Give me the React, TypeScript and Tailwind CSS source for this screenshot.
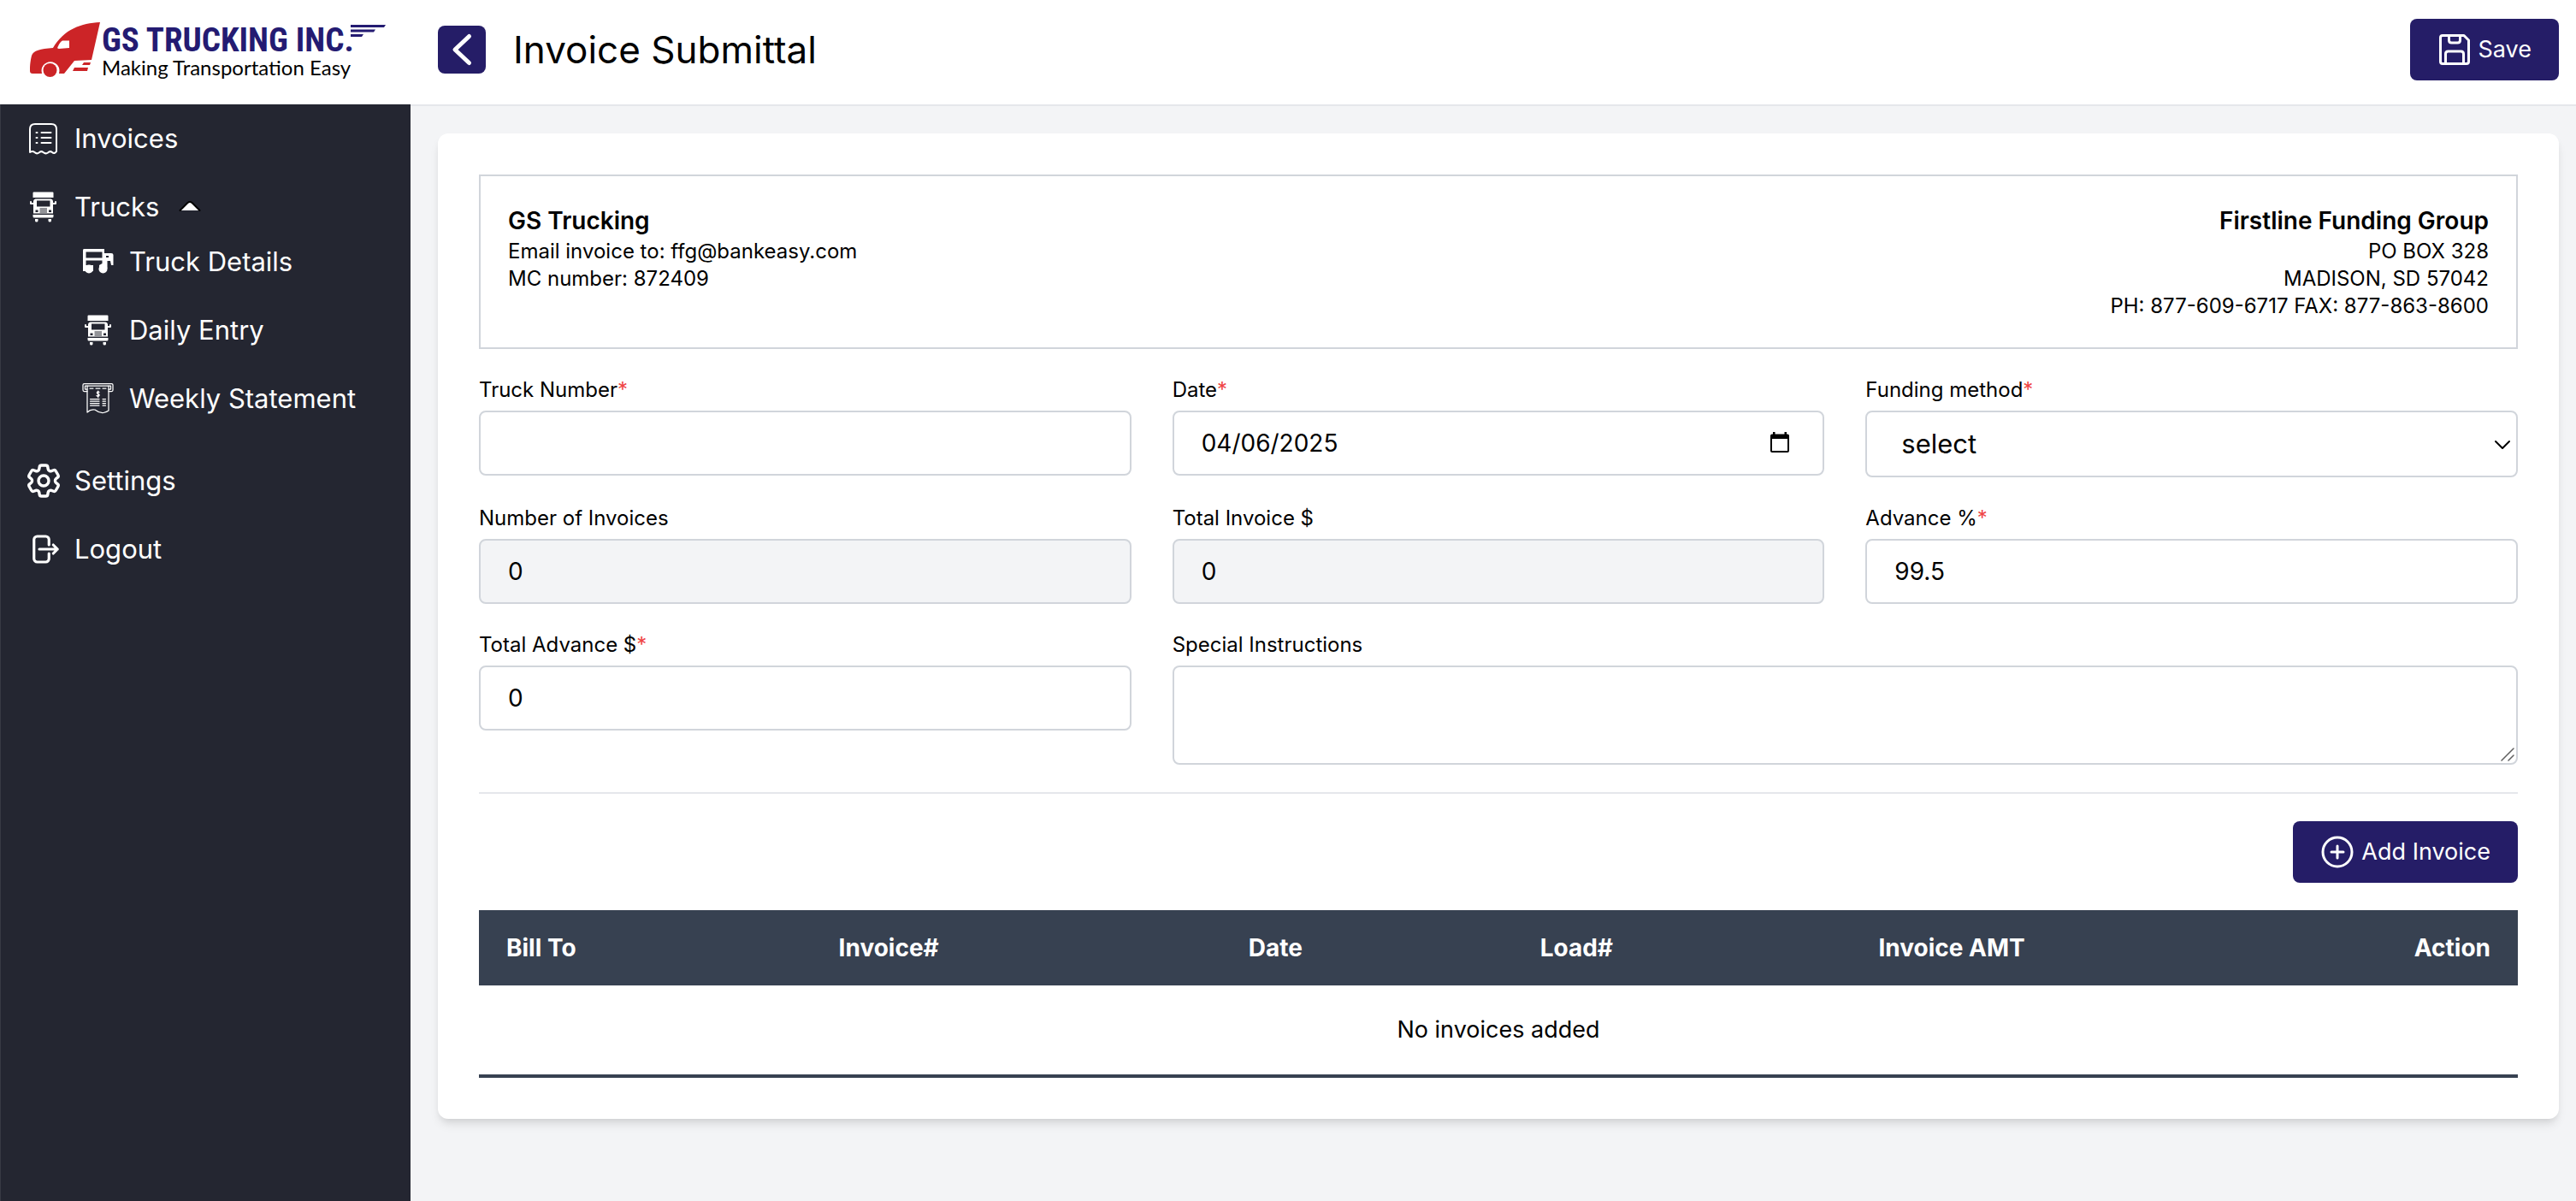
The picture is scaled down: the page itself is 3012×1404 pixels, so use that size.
import React from "react";
import { HiOutlineCog6Tooth, HiOutlineArrowRightOnRectangle } from "react-icons/hi2";

const line = { fill: "none", stroke: "currentColor", strokeLinecap: "round", strokeLinejoin: "round" } as const;

function LogoMark() {
  return (
    <svg viewBox="0 0 84 66" className="h-[66px] w-[84px] shrink-0" aria-hidden="true">
      <path
        fill="#cc2427"
        d="M82 1 C60 2 40 9 27 31 C12 32 4 34 2 40 C0 48 0 54 0 58 Q0 61 3 61 L14 61 A10.500 10.500 0 1 1 34 61 L40 61 L52 46 L72 45 Z"
      />
      <circle cx="23.500" cy="57" r="8" fill="#cc2427" />
      <path fill="#fff" d="M38 22.500 L46 22.500 L46 31 L34 32 Q31 32 33 29 Q35 24 38 22.500 Z" />
      <path fill="#cc2427" d="M63 48 L71 48 L70 51 L61 51 Z M52 54 L68 54 L67 58 L50 58 Z" />
    </svg>
  );
}

function SpeedLines() {
  return (
    <svg viewBox="0 0 42 16" className="mt-1 -ml-1 h-4 w-[42px] shrink-0" aria-hidden="true">
      <path fill="#241b72" d="M0 0 L41 0 L39 3 L0 3 Z M0 5.500 L29 5.500 L27 8.500 L0 8.500 Z M0 11 L15 11 L13 14 L0 14 Z" />
    </svg>
  );
}

function InvoiceIcon() {
  return (
    <svg viewBox="0 0 40 40" className="size-10" aria-hidden="true">
      <path
        {...line}
        strokeWidth="2"
        d="M4 35 V9 Q4 3 10 3 H29 Q35 3 35 9 V35 Q32.500 38.500 30 36 Q27.500 34 25 36.500 Q22.500 38.500 19.500 36 Q17 34 14.500 36.500 Q12 38.500 9.500 36 Q7 34 4 36 Z"
      />
      <path {...line} strokeWidth="2" d="M17.500 13 H28.500 M17.500 19 H28.500 M17.500 25 H28.500 M11.500 13 H12.500 M11.500 19 H12.500 M11.500 25 H12.500" />
    </svg>
  );
}

function FrontTruckIcon() {
  return (
    <svg viewBox="0 0 40 40" className="size-10" aria-hidden="true">
      <path
        fill="currentColor"
        fillRule="evenodd"
        d="M8 2.500 H30.500 Q31.500 2.500 31.500 3.500 V9 H7.500 V3.500 Q7.500 2.500 8.500 2.500 Z
           M10.500 10.500 H28.500 Q30.500 10.500 31 13 V27.500 H8 V13 Q8.500 10.500 10.500 10.500 Z
           M12 12.500 V19.500 H27.500 V12.500 Z
           M10.500 23.500 V26 H13.500 V23.500 Z M26 23.500 V26 H29 V23.500 Z
           M15.500 21.500 V22.500 H24 V21.500 Z M15.500 23.500 V24.500 H24 V23.500 Z M15.500 25.500 V26.500 H24 V25.500 Z
           M7.500 29 H31.500 V31 Q31.500 32.500 30 32.500 H9 Q7.500 32.500 7.500 31 Z
           M10 34 H13.500 V36 Q13.500 37.500 11.750 37.500 Q10 37.500 10 36 Z
           M25.500 34 H29 V36 Q29 37.500 27.250 37.500 Q25.500 37.500 25.500 36 Z"
      />
      <path {...line} strokeWidth="2" d="M8 16 H5 V14 M31 16 H34 V14" />
    </svg>
  );
}

function SideTruckIcon() {
  return (
    <svg viewBox="0 0 40 40" className="size-10" aria-hidden="true">
      <path
        fill="currentColor"
        fillRule="evenodd"
        d="M3 5 H27 V10 H35 Q37.500 10 37.500 12 V24 H35 L34 19 H30.500 V28 H21 V24 H14 V31 H2 V7 Q2 5 3 5 Z
           M5.500 8.500 V15.500 H24.500 V8.500 Z M5.500 18.500 V24 H21 L24.500 22 V18.500 Z M29 13 V15 H32 V13 Z"
      />
      <circle cx="9" cy="28.500" r="5" fill="currentColor" />
      <circle cx="25.500" cy="28.500" r="5" fill="currentColor" />
    </svg>
  );
}

function StatementIcon() {
  return (
    <svg viewBox="0 0 40 40" className="size-10" aria-hidden="true">
      <g {...line} strokeWidth="1.250">
        <path d="M7 11.500 H3.500 Q2 11.500 2 10 V4 Q2 2.500 3.500 2.500 H35.500 Q37 2.500 37 4 V10 Q37 11.500 35.500 11.500 H32" />
        <path d="M7 9 H4.500 V5 H34.500 V9 H32" />
        <path d="M7 5 V36 Q11 32 16 33 Q21 37 26 36.500 Q30 35.500 32 34 V5" />
        <path d="M10 8 H14 M17 8 H22 M25 8 H29" />
        <path d="M21 12.500 Q19.500 11.500 18.500 12.500 Q18 14 20 14.500 Q22 15.500 20.500 17 Q19 17.500 18 16.500 M19.750 11 V18.500" />
        <path d="M10.500 20.500 H21 M10.500 23 H21 M10.500 25.500 H21 M10.500 28 H21 M25 20.500 H28.500 M25 23 H28.500 M25 25.500 H28.500 M25 28 H28.500" />
      </g>
    </svg>
  );
}

function SaveIcon() {
  return (
    <svg viewBox="0 0 40 40" className="size-10" aria-hidden="true">
      <path
        {...line}
        strokeWidth="3"
        d="M6 3.500 H31 L36.500 9 V34 Q36.500 36.500 34 36.500 H6 Q3.500 36.500 3.500 34 V6 Q3.500 3.500 6 3.500 Z M13.500 4 V9 Q13.500 12 16.500 12 H23.500 Q26.500 12 26.500 9 V4 M9.500 36 V25 Q9.500 22 12.500 22 H27.500 Q30.500 22 30.500 25 V36"
      />
    </svg>
  );
}

function PlusCircleIcon() {
  return (
    <svg viewBox="0 0 40 40" className="size-10" aria-hidden="true">
      <circle cx="20" cy="20" r="17" {...line} strokeWidth="3" />
      <path {...line} strokeWidth="3" d="M20 13 V27 M13 20 H27" />
    </svg>
  );
}

function NavLink({ icon, label }: { icon: React.ReactNode; label: string }) {
  return (
    <a href="#" className="flex items-center gap-4 py-4 text-[31px] leading-[48px]">
      <span className="flex size-10 shrink-0 items-center justify-center">{icon}</span>
      {label}
    </a>
  );
}

function Sidebar() {
  return (
    <nav className="w-[480px] shrink-0 border-l border-[#373943] bg-[#242631] pl-[30px] text-white">
      <ul>
        <li>
          <NavLink icon={<InvoiceIcon />} label="Invoices" />
        </li>
        <li className="pb-4">
          <button type="button" className="flex items-center gap-4 pt-4 text-[31px] leading-[48px]">
            <span className="flex size-10 shrink-0 items-center justify-center">
              <FrontTruckIcon />
            </span>
            Trucks
            <svg viewBox="0 0 40 40" className="size-10" aria-hidden="true">
              <path d="M9 24 L17.500 15.500 Q20 13.500 22.500 15.500 L31 24 Z" fill="#fff" />
              <path {...line} stroke="#000" strokeWidth="2" d="M8.500 24 L17.500 15 Q20 13 22.500 15 L31.500 24" />
            </svg>
          </button>
          <ul className="pl-16">
            <li>
              <NavLink icon={<SideTruckIcon />} label="Truck Details" />
            </li>
            <li>
              <NavLink icon={<FrontTruckIcon />} label="Daily Entry" />
            </li>
            <li>
              <NavLink icon={<StatementIcon />} label="Weekly Statement" />
            </li>
          </ul>
        </li>
        <li>
          <NavLink icon={<HiOutlineCog6Tooth strokeWidth={1.7} className="size-12 shrink-0" />} label="Settings" />
        </li>
        <li>
          <NavLink icon={<HiOutlineArrowRightOnRectangle strokeWidth={1.9} className="size-10 shrink-0" />} label="Logout" />
        </li>
      </ul>
    </nav>
  );
}

function Field({
  id,
  label,
  required,
  className,
  children,
}: {
  id: string;
  label: string;
  required?: boolean;
  className?: string;
  children: React.ReactNode;
}) {
  return (
    <div className={className}>
      <label htmlFor={id} className="mb-2 block text-[24px] leading-8">
        {label}
        {required && <span className="text-[#ef4444]">*</span>}
      </label>
      {children}
    </div>
  );
}

const control = "block h-[76px] w-full rounded-lg border-2 border-[#d1d5db] bg-white px-8 text-[28px] leading-10 outline-none";
const readOnlyControl = "block h-[76px] w-full rounded-lg border-2 border-[#d1d5db] bg-[#f3f4f6] px-8 text-[28px] leading-10 outline-none";

function Calendar() {
  return (
    <svg viewBox="0 0 24 28" className="pointer-events-none absolute top-6 right-10 h-7 w-6" aria-hidden="true">
      <path
        fill="#000"
        fillRule="evenodd"
        d="M4 1 H6.500 V3.500 H17.500 V1 H20 V3.500 H21 Q23 3.500 23 5.500 V23 Q23 25 21 25 H3 Q1 25 1 23 V5.500 Q1 3.500 3 3.500 H4 Z M3 9 V23 H21 V9 Z"
      />
    </svg>
  );
}

export default function App() {
  return (
    <div className="flex min-h-screen flex-col bg-[#f3f4f6] font-['Inter',sans-serif] text-black">
      <header className="flex h-[122px] items-center bg-white pr-5 pb-1.5">
        <a href="#" aria-label="GS Trucking home" className="flex w-[512px] shrink-0 items-start pl-[35px]">
          <LogoMark />
          <span className="flex flex-col whitespace-nowrap">
            <span className="flex items-start">
              <span className="font-['Roboto_Condensed','Liberation_Sans_Narrow',sans-serif] text-[39px] leading-[44px] font-bold text-[#241b72]">
                GS TRUCKING INC.
              </span>
              <SpeedLines />
            </span>
            <span className="font-['Lato',sans-serif] text-[24px] leading-5">Making Transportation Easy</span>
          </span>
        </a>
        <button type="button" aria-label="Back" className="flex size-14 shrink-0 items-center justify-center rounded-lg bg-[#251d67] text-white">
          <svg viewBox="0 0 40 40" className="size-10" aria-hidden="true">
            <path {...line} strokeWidth="5" d="M28.500 4.500 L12 20 L28.500 35.500" />
          </svg>
        </button>
        <h1 className="ml-8 text-[44px] leading-[56px]">Invoice Submittal</h1>
        <button type="button" className="ml-auto flex items-center gap-2 rounded-lg bg-[#251d67] px-8 py-4 text-[27px] leading-10 text-white">
          <SaveIcon />
          Save
        </button>
      </header>
      <div className="flex grow">
        <Sidebar />
        <main className="grow border-t-2 border-[#e5e7eb] pt-8 pr-5 pb-8 pl-8">
          <form className="rounded-xl bg-white p-12 shadow-[0_8px_12px_-2px_rgba(0,0,0,0.1),0_4px_8px_-4px_rgba(0,0,0,0.1)]" onSubmit={(e) => e.preventDefault()}>
            <section className="flex justify-between border-2 border-[#d1d5db] p-8 text-[24px] leading-8">
              <div>
                <h2 className="text-[28px] leading-10 font-semibold">GS Trucking</h2>
                <p>Email invoice to: ffg@bankeasy.com</p>
                <p>MC number: 872409</p>
              </div>
              <div className="text-right">
                <h2 className="text-[28px] leading-10 font-semibold">Firstline Funding Group</h2>
                <p>PO BOX 328</p>
                <p>MADISON, SD 57042</p>
                <p>PH: 877-609-6717 FAX: 877-863-8600</p>
              </div>
            </section>

            <div className="mt-8 grid grid-cols-3 gap-x-12 gap-y-8">
              <Field id="truck" label="Truck Number" required>
                <input id="truck" type="text" className={control} />
              </Field>
              <Field id="date" label="Date" required>
                <div className="relative">
                  <input id="date" type="text" defaultValue="04/06/2025" className={control} />
                  <Calendar />
                </div>
              </Field>
              <Field id="method" label="Funding method" required>
                <div className="relative">
                  <select
                    id="method"
                    className="block h-[78px] w-full appearance-none rounded-lg border-2 border-[#d1d5db] bg-white px-10 text-[31px] leading-10 outline-none"
                  >
                    <option>select</option>
                  </select>
                  <svg viewBox="0 0 20 12" className="pointer-events-none absolute top-[34px] right-2 h-3 w-5" aria-hidden="true">
                    <path {...line} strokeWidth="2" d="M2 2 L10 10 L18 2" />
                  </svg>
                </div>
              </Field>
              <Field id="count" label="Number of Invoices">
                <input id="count" type="text" readOnly defaultValue="0" className={readOnlyControl} />
              </Field>
              <Field id="total" label="Total Invoice $">
                <input id="total" type="text" readOnly defaultValue="0" className={readOnlyControl} />
              </Field>
              <Field id="advance" label="Advance %" required>
                <input id="advance" type="text" defaultValue="99.5" className={control} />
              </Field>
              <Field id="totalAdvance" label="Total Advance $" required>
                <input id="totalAdvance" type="text" defaultValue="0" className={control} />
              </Field>
              <Field id="notes" label="Special Instructions" className="col-span-2">
                <div className="relative">
                  <textarea
                    id="notes"
                    className="block h-[116px] w-full resize-none rounded-lg border-2 border-[#d1d5db] bg-white px-8 py-4 text-[28px] leading-10 outline-none"
                  />
                  <svg viewBox="0 0 16 16" className="pointer-events-none absolute right-1 bottom-1 size-4" aria-hidden="true">
                    <path {...line} stroke="#5f5f5f" strokeWidth="1.500" d="M1 15 L15 1 M9 15 L15 9" />
                  </svg>
                </div>
              </Field>
            </div>

            <div className="mt-8 flex justify-end border-t-2 border-[#e5e7eb] py-8">
              <button type="button" className="flex items-center gap-2 rounded-lg bg-[#251d67] px-8 py-4 text-[27px] leading-10 text-white">
                <PlusCircleIcon />
                Add Invoice
              </button>
            </div>

            <table className="w-full table-fixed border-b-4 border-[#374151] text-[27px] leading-10">
              <colgroup>
                <col className="w-[16.300%]" />
                <col className="w-[20.100%]" />
                <col className="w-[14.300%]" />
                <col className="w-[16.600%]" />
                <col />
                <col className="w-[12%]" />
              </colgroup>
              <thead className="bg-[#374151] text-[28px] text-white">
                <tr className="text-left">
                  <th className="px-8 py-6 font-bold">Bill To</th>
                  <th className="px-8 py-6 font-bold">Invoice#</th>
                  <th className="px-8 py-6 font-bold">Date</th>
                  <th className="px-8 py-6 font-bold">Load#</th>
                  <th className="px-8 py-6 font-bold">Invoice AMT</th>
                  <th className="px-8 py-6 text-right font-bold">Action</th>
                </tr>
              </thead>
              <tbody>
                <tr>
                  <td colSpan={6} className="py-8 text-center">
                    No invoices added
                  </td>
                </tr>
              </tbody>
            </table>
          </form>
        </main>
      </div>
    </div>
  );
}
